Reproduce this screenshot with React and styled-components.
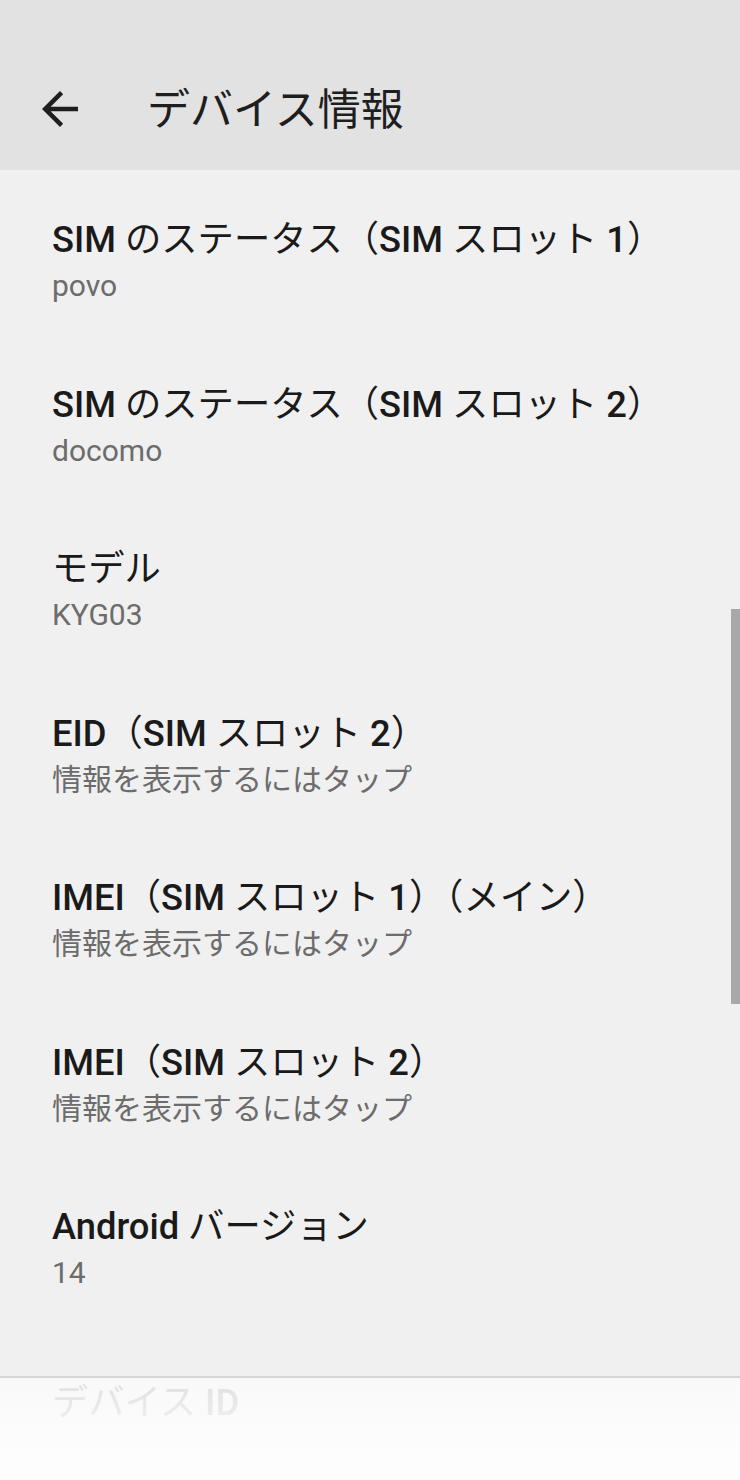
import React from "react";
import styled, { createGlobalStyle } from "styled-components";

const GlobalStyle = createGlobalStyle`
  html, body {
    margin: 0;
    padding: 0;
    background: #f0f0f0;
  }
  body {
    font-family: Roboto, "Noto Sans CJK JP", sans-serif;
    -webkit-font-smoothing: antialiased;
  }
`;

const Screen = styled.div`
  position: relative;
  width: 740px;
  height: 1480px;
  overflow: hidden;
  background: #f0f0f0;
  display: flex;
  flex-direction: column;
`;

const AppBar = styled.header`
  flex: none;
  height: 170px;
  box-sizing: border-box;
  padding-top: 48px;
  background: #e2e2e2;
  display: flex;
  align-items: center;
`;

const BackButton = styled.button`
  flex: none;
  width: 54px;
  height: 54px;
  margin-left: 33px;
  margin-right: 60px;
  padding: 0;
  border: 0;
  background: transparent;
  display: flex;
  align-items: center;
  justify-content: center;
  color: #1e1e1e;
`;

const Title = styled.h1`
  margin: 0 0 6px;
  font-size: 43px;
  font-weight: 400;
  color: #1e1e1e;
  letter-spacing: 0;
`;

const List = styled.ul`
  list-style: none;
  margin: 0;
  padding: 11px 0 0;
`;

const Row = styled.li`
  height: ${(p) => (p.$single ? "140px" : "164.5px")};
  box-sizing: border-box;
  padding: 0 52px;
  display: flex;
  flex-direction: column;
  justify-content: center;
`;

const RowTitle = styled.div`
  font-size: 36.3px;
  line-height: 46px;
  color: #1a1a1a;
  white-space: nowrap;
`;

const Latin = styled.span`
  font-weight: 500;
`;

const RowSummary = styled.div`
  font-size: 30px;
  line-height: 46px;
  color: #6c6c6c;
  white-space: nowrap;
`;

const ScrollThumb = styled.div`
  position: absolute;
  right: 0;
  top: 609px;
  width: 9px;
  height: 395px;
  background: #a8a8a8;
`;

const NavFade = styled.div`
  position: absolute;
  left: 0;
  right: 0;
  bottom: 0;
  height: 102px;
  border-top: 2px solid #d6d6d6;
  background: linear-gradient(rgba(250, 250, 250, 0.88), rgba(253, 253, 253, 0.98) 70%);
`;

const ArrowBack = () => (
  <svg width="54" height="54" viewBox="0 0 24 24" fill="currentColor">
    <path d="M20 11H7.83l5.59-5.59L12 4l-8 8 8 8 1.41-1.41L7.83 13H20v-2z" />
  </svg>
);

// Latin runs of the title are medium weight, Japanese stays regular
const renderTitle = (text) =>
  text.split(/([A-Za-z0-9]+)/).map((part, i) =>
    /^[A-Za-z0-9]+$/.test(part) ? <Latin key={i}>{part}</Latin> : part
  );

const items = [
  { title: "SIM のステータス（SIM スロット 1）", summary: "povo" },
  { title: "SIM のステータス（SIM スロット 2）", summary: "docomo" },
  { title: "モデル", summary: "KYG03" },
  { title: "EID（SIM スロット 2）", summary: "情報を表示するにはタップ" },
  { title: "IMEI（SIM スロット 1）（メイン）", summary: "情報を表示するにはタップ" },
  { title: "IMEI（SIM スロット 2）", summary: "情報を表示するにはタップ" },
  { title: "Android バージョン", summary: "14" },
  { title: "デバイス ID", summary: "" },
];

export default function App() {
  return (
    <>
      <GlobalStyle />
      <Screen>
        <AppBar>
          <BackButton aria-label="戻る">
            <ArrowBack />
          </BackButton>
          <Title>デバイス情報</Title>
        </AppBar>
        <List>
          {items.map((item) => (
            <Row key={item.title} $single={!item.summary}>
              <RowTitle>{renderTitle(item.title)}</RowTitle>
              {item.summary && <RowSummary>{item.summary}</RowSummary>}
            </Row>
          ))}
        </List>
        <ScrollThumb />
        <NavFade />
      </Screen>
    </>
  );
}
